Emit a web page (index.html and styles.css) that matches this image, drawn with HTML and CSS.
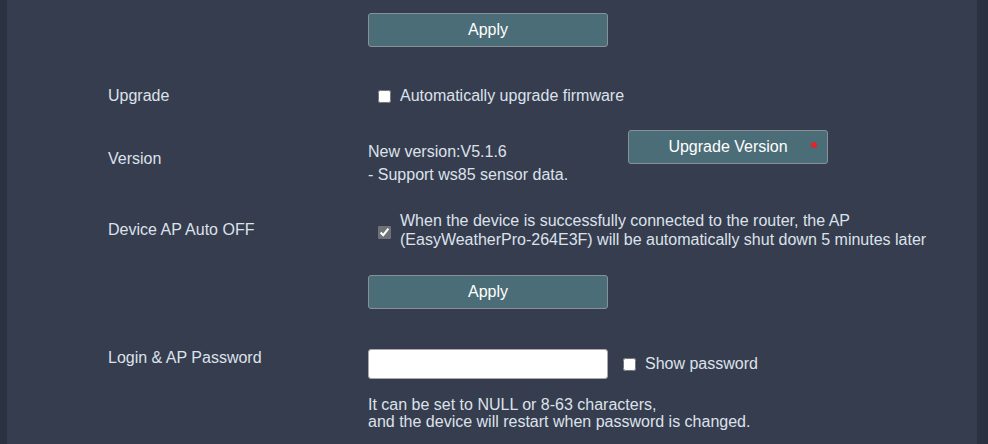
FILE: index.html
```html
<!DOCTYPE html>
<html lang="en">
<head>
    <meta charset="UTF-8">
    <meta name="viewport" content="width=device-width, initial-scale=1.0">
    <title>Device Settings</title>
    <link rel="stylesheet" href="styles.css">
</head>
<body>
    <div class="panel">
        <div class="row row-apply-top">
            <div class="label"></div>
            <div class="value">
                <button class="btn">Apply</button>
            </div>
        </div>

        <div class="row row-upgrade">
            <div class="label">Upgrade</div>
            <div class="value">
                <label class="check">
                    <input type="checkbox">
                    <span>Automatically upgrade firmware</span>
                </label>
            </div>
        </div>

        <div class="row row-version">
            <div class="label">Version</div>
            <div class="value version">
                <div class="version-text">
                    New version:V5.1.6<br>
                    - Support ws85 sensor data.
                </div>
                <button class="btn btn-upgrade">Upgrade Version<span class="dot"></span></button>
            </div>
        </div>

        <div class="row row-ap">
            <div class="label">Device AP Auto OFF</div>
            <div class="value">
                <label class="check check-ap">
                    <input type="checkbox" checked>
                    <span>When the device is successfully connected to the router, the AP<br>(EasyWeatherPro-264E3F) will be automatically shut down 5 minutes later</span>
                </label>
            </div>
        </div>

        <div class="row row-apply">
            <div class="label"></div>
            <div class="value">
                <button class="btn">Apply</button>
            </div>
        </div>

        <div class="row row-password">
            <div class="label">Login &amp; AP Password</div>
            <div class="value">
                <div class="pw-line">
                    <input type="password" class="pw-input">
                    <label class="check">
                        <input type="checkbox">
                        <span>Show password</span>
                    </label>
                </div>
                <div class="hint">
                    It can be set to NULL or 8-63 characters,<br>
                    and the device will restart when password is changed.
                </div>
            </div>
        </div>
    </div>
</body>
</html>
```

FILE: styles.css
```css
html, body {
    margin: 0;
    padding: 0;
}
body {
    background-color: #2a3140;
    font-family: "Liberation Sans", Arial, sans-serif;
    font-size: 16px;
    color: #dde2ea;
}
.panel {
    width: 970px;
    height: 444px;
    margin-left: 7px;
    background-color: #353d4f;
    overflow: hidden;
}
.row {
    display: grid;
    grid-template-columns: 260px 1fr;
    align-items: center;
    padding-left: 101px;
}
.label {
    line-height: 18px;
}
.btn {
    width: 240px;
    height: 34px;
    background-color: #4b6d77;
    color: #ffffff;
    border: 1px solid #8a9097;
    border-radius: 3px;
    font-family: "Liberation Sans", Arial, sans-serif;
    font-size: 16px;
    padding: 0;
    display: block;
    cursor: pointer;
}
.row-apply-top {
    margin-top: 13px;
}
.row-upgrade {
    margin-top: 34px;
    height: 30px;
}
.check {
    display: flex;
    align-items: center;
}
.check input {
    width: 13px;
    height: 13px;
    margin: 0 9px 0 10px;
    accent-color: #6e7176;
}
.row-version {
    margin-top: 19px;
}
.row-version .label {
    padding-top: 2px;
}
.version {
    display: flex;
    align-items: flex-start;
}
.version-text {
    width: 260px;
    padding-top: 10px;
    line-height: 23px;
}
.btn-upgrade {
    width: 200px;
    position: relative;
}
.dot {
    position: absolute;
    right: 10px;
    top: 11px;
    width: 6px;
    height: 6px;
    border-radius: 50%;
    background-color: #e0262b;
}
.row-ap {
    margin-top: 25px;
}
.check-ap {
    line-height: 19px;
}
.check-ap input {
    margin-top: 4px;
}
.row-apply {
    margin-top: 26px;
}
.row-password {
    margin-top: 40px;
    align-items: start;
}
.row-password .label {
    margin-top: 0;
}
.pw-line {
    display: flex;
    align-items: center;
}
.pw-input {
    width: 240px;
    height: 30px;
    box-sizing: border-box;
    border: 1px solid #a9a9a9;
    border-radius: 3px;
    background: #ffffff;
    margin: 0;
    padding: 0 6px;
    margin-right: 5px;
}
.hint {
    margin-top: 17px;
    line-height: 17px;
}
```
